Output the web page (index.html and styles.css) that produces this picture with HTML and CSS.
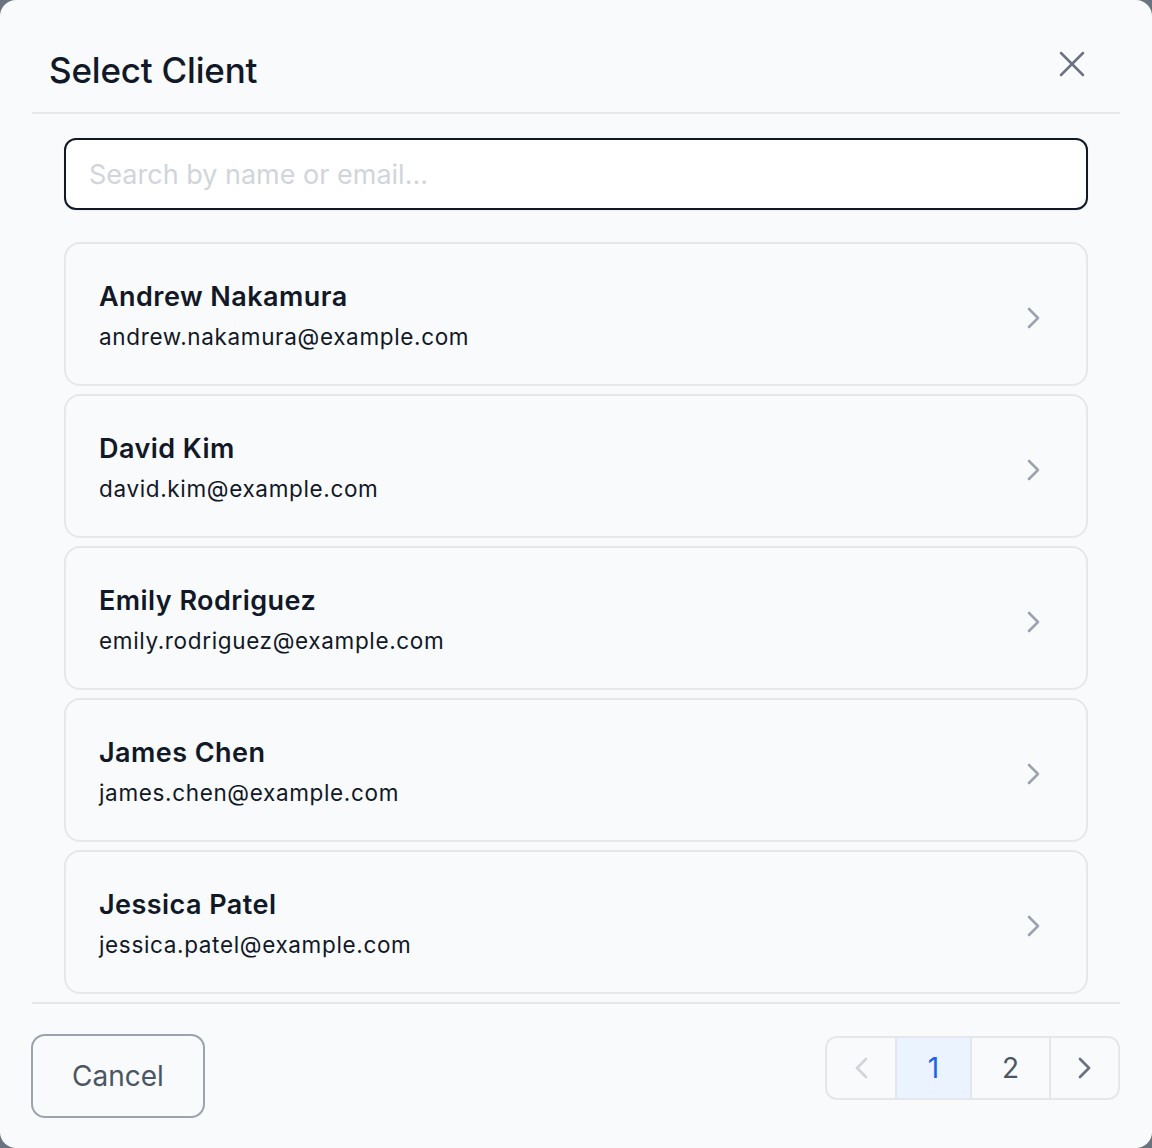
FILE: index.html
```html
<!DOCTYPE html>
<html>
<head>
<meta charset="utf-8">
<title>Select Client</title>
<link rel="stylesheet" href="styles.css">
</head>
<body>
<div class="modal">
	<div class="modal_header">
		<h2 class="modal_title">Select Client</h2>
		<button class="close_btn" aria-label="Close">
			<svg width="26" height="26" viewBox="0 0 26 26" fill="none" stroke="currentColor" stroke-width="2.5" stroke-linecap="round"><path d="M2 2L24 24M24 2L2 24"/></svg>
		</button>
	</div>

	<div class="modal_body">
		<input class="search_box" type="text" placeholder="Search by name or email...">

		<div class="client_list">
			<div class="client_card">
				<div class="client_info">
					<div class="client_name">Andrew Nakamura</div>
					<div class="client_email">andrew.nakamura@example.com</div>
				</div>
				<svg class="chevron" width="14" height="22" viewBox="0 0 14 22" fill="none" stroke="currentColor" stroke-width="2.6" stroke-linecap="round" stroke-linejoin="round"><path d="M2 2l9 9-9 9"/></svg>
			</div>
			<div class="client_card">
				<div class="client_info">
					<div class="client_name">David Kim</div>
					<div class="client_email">david.kim@example.com</div>
				</div>
				<svg class="chevron" width="14" height="22" viewBox="0 0 14 22" fill="none" stroke="currentColor" stroke-width="2.6" stroke-linecap="round" stroke-linejoin="round"><path d="M2 2l9 9-9 9"/></svg>
			</div>
			<div class="client_card">
				<div class="client_info">
					<div class="client_name">Emily Rodriguez</div>
					<div class="client_email">emily.rodriguez@example.com</div>
				</div>
				<svg class="chevron" width="14" height="22" viewBox="0 0 14 22" fill="none" stroke="currentColor" stroke-width="2.6" stroke-linecap="round" stroke-linejoin="round"><path d="M2 2l9 9-9 9"/></svg>
			</div>
			<div class="client_card">
				<div class="client_info">
					<div class="client_name">James Chen</div>
					<div class="client_email">james.chen@example.com</div>
				</div>
				<svg class="chevron" width="14" height="22" viewBox="0 0 14 22" fill="none" stroke="currentColor" stroke-width="2.6" stroke-linecap="round" stroke-linejoin="round"><path d="M2 2l9 9-9 9"/></svg>
			</div>
			<div class="client_card">
				<div class="client_info">
					<div class="client_name">Jessica Patel</div>
					<div class="client_email">jessica.patel@example.com</div>
				</div>
				<svg class="chevron" width="14" height="22" viewBox="0 0 14 22" fill="none" stroke="currentColor" stroke-width="2.6" stroke-linecap="round" stroke-linejoin="round"><path d="M2 2l9 9-9 9"/></svg>
			</div>
		</div>
	</div>

	<div class="modal_footer">
		<button class="cancel_btn">Cancel</button>
		<div class="pager">
			<button class="pager_cell pager_prev" disabled>
				<svg width="14" height="22" viewBox="0 0 14 22" fill="none" stroke="currentColor" stroke-width="2.8" stroke-linecap="round" stroke-linejoin="round"><path d="M12 2l-9 9 9 9"/></svg>
			</button>
			<button class="pager_cell pager_num active">1</button>
			<button class="pager_cell pager_num">2</button>
			<button class="pager_cell pager_next">
				<svg width="14" height="22" viewBox="0 0 14 22" fill="none" stroke="currentColor" stroke-width="2.8" stroke-linecap="round" stroke-linejoin="round"><path d="M2 2l9 9-9 9"/></svg>
			</button>
		</div>
	</div>
</div>
</body>
</html>
```

FILE: styles.css
```css
* {margin: 0; padding: 0; box-sizing: border-box;}
html, body {height: 100%;}
body {background: #6b7280; font-family: Inter, "Noto Sans", sans-serif; color: #111827;}

.modal {
	height: 100%;
	background: #f9fafb;
	border-radius: 16px;
	padding: 0 32px;
	display: flex;
	flex-direction: column;
}

/* header */
.modal_header {
	display: flex;
	justify-content: space-between;
	align-items: flex-start;
	border-bottom: 2px solid #e5e7eb;
	padding: 48px 35px 0 17px;
	height: 114px;
}
.modal_title {font-size: 35px; font-weight: 500; line-height: 44px; color: #111827; letter-spacing: -0.2px;}
.close_btn {background: none; border: none; color: #6b7280; margin-top: 3px; cursor: pointer;}
.close_btn svg {display: block;}

/* search + list */
.modal_body {padding: 24px 32px 0 32px; flex: 1; overflow: hidden;}
.search_box {
	width: 100%;
	height: 72px;
	border: 2px solid #111827;
	border-radius: 12px;
	background: #fff;
	padding: 0 23px;
	font-family: inherit;
	font-size: 27px;
	color: #111827;
	outline: none;
	box-shadow: 0 1px 2px rgba(0,0,0,0.05);
}
.search_box::placeholder {color: #d1d5db;}

.client_list {display: flex; flex-direction: column; gap: 8px; margin-top: 32px;}
.client_card {
	height: 144px;
	border: 2px solid #e5e7eb;
	border-radius: 16px;
	padding: 0 45px 0 33px;
	display: flex;
	align-items: center;
	justify-content: space-between;
}
.client_info {padding-top: 5px;}
.client_name {font-size: 27px; font-weight: 600; line-height: 32px; letter-spacing: 0.45px; color: #111827;}
.client_email {font-size: 22.5px; line-height: 32px; margin-top: 8px; letter-spacing: 0.65px; color: #111827;}
.chevron {color: #9ca3af; display: block; margin-top: 8px;}

/* footer */
.modal_footer {
	border-top: 2px solid #e5e7eb;
	height: 146px;
	display: flex;
	justify-content: space-between;
	align-items: flex-start;
	padding-top: 30px;
}
.cancel_btn {
	width: 174px;
	height: 84px;
	border: 2px solid #9ca3af;
	border-radius: 14px;
	background: transparent;
	font-family: inherit;
	font-size: 28px;
	color: #4b5563;
	margin-left: -1px;
}
.pager {
	display: flex;
	border: 2px solid #e5e7eb;
	border-radius: 12px;
	overflow: hidden;
	margin-top: 2px;
}
.pager_cell {
	height: 60px;
	background: transparent;
	border: none;
	border-left: 2px solid #e5e7eb;
	font-family: inherit;
	font-size: 28px;
	color: #4b5563;
	display: flex;
	align-items: center;
	justify-content: center;
}
.pager_cell:first-child {border-left: none;}
.pager_prev {width: 68px; color: #d1d5db;}
.pager_next {width: 69px; color: #6b7280;}
.pager_num {width: 75px;}
.pager_num.active {background: #eaf3ff; color: #1d63e8;}
.pager_num + .pager_num {width: 79px;}
```
